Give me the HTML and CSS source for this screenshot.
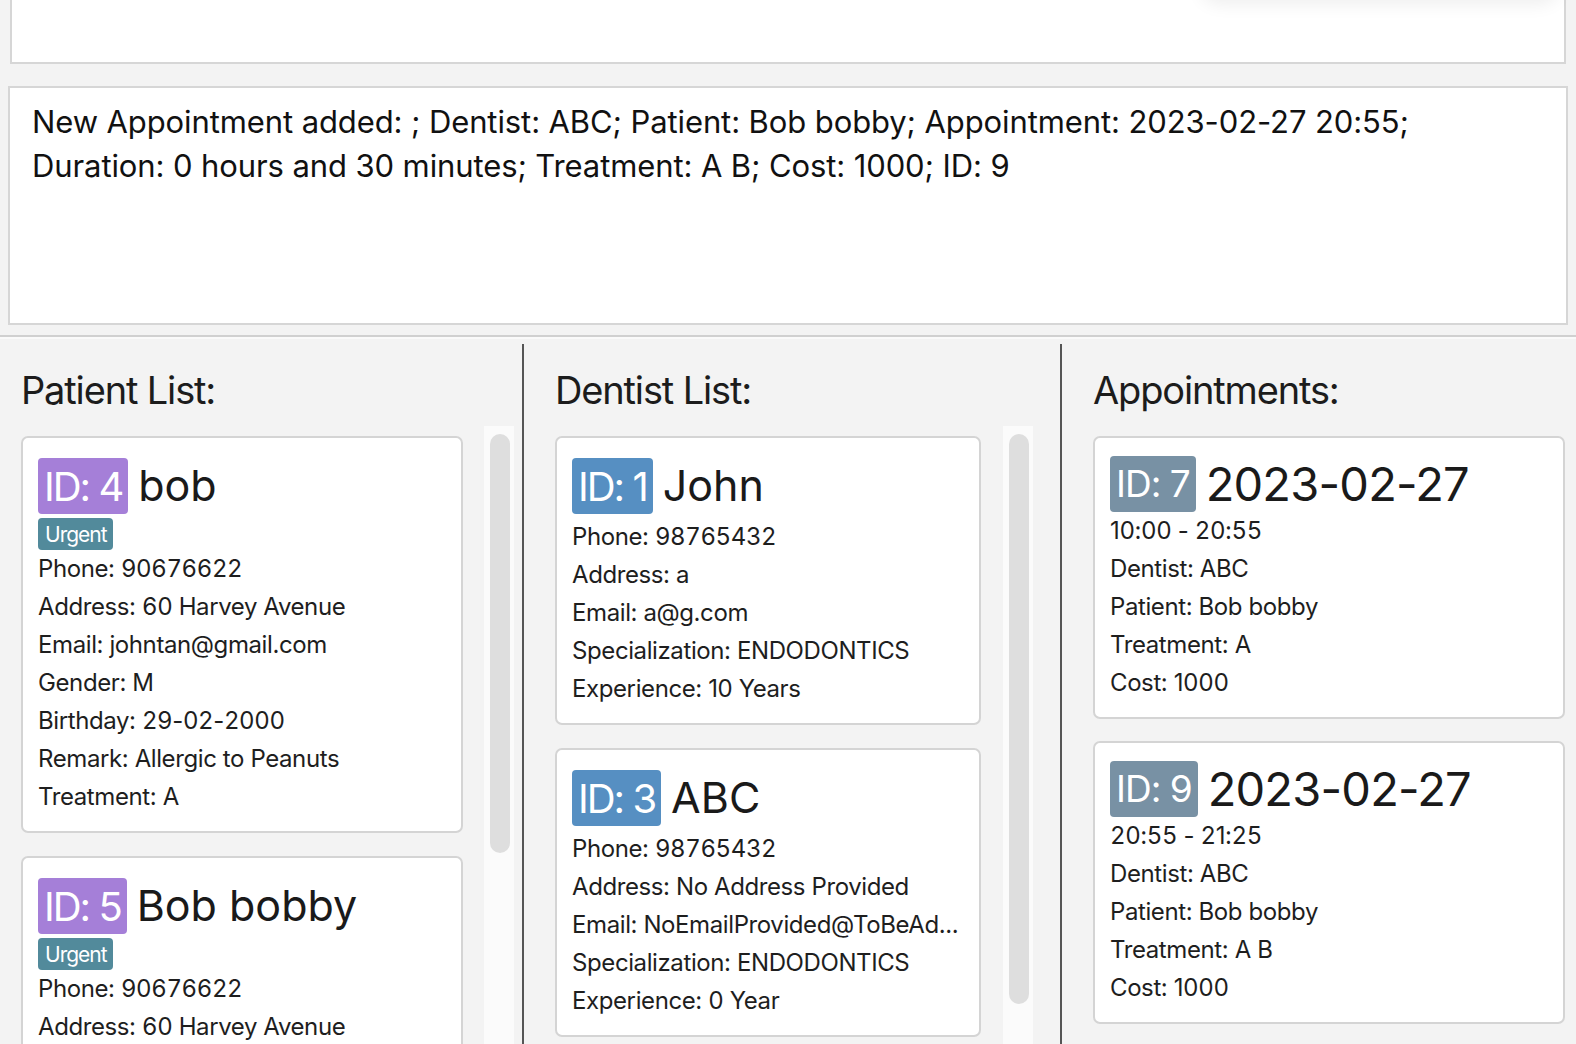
FILE: index.html
```html
<!DOCTYPE html>
<html lang="en">
<head>
<meta charset="utf-8">
<title>Dental Clinic</title>
<link rel="stylesheet" href="styles.css">
</head>
<body>
<div class="app">
  <div class="popup-shadow"></div>
  <div class="command-box"></div>
  <div class="result-box">New Appointment added: ; Dentist: ABC; Patient: Bob bobby; Appointment: 2023-02-27 20:55;<br>Duration: 0 hours and 30 minutes; Treatment: A B; Cost: 1000; ID: 9</div>
  <div class="divider"></div>
  <div class="lists">
    <section class="column column-patient">
      <h2 class="col-title">Patient List:</h2>
      <div class="list-area">
        <div class="list">
          <div class="card">
            <div class="card-head"><span class="badge badge-patient">ID: 4</span><span class="name">bob</span></div>
            <div class="tags"><span class="tag">Urgent</span></div>
            <div class="field">Phone: <span class="n">90676622</span></div>
            <div class="field">Address: <span class="n">60</span> Harvey Avenue</div>
            <div class="field">Email: johntan@gmail.com</div>
            <div class="field">Gender: M</div>
            <div class="field">Birthday: <span class="n">29</span>-<span class="n">02</span>-<span class="n">2000</span></div>
            <div class="field">Remark: Allergic to Peanuts</div>
            <div class="field">Treatment: A</div>
          </div>
          <div class="card">
            <div class="card-head"><span class="badge badge-patient">ID: 5</span><span class="name">Bob bobby</span></div>
            <div class="tags"><span class="tag">Urgent</span></div>
            <div class="field">Phone: <span class="n">90676622</span></div>
            <div class="field">Address: <span class="n">60</span> Harvey Avenue</div>
            <div class="field">Email: johntan@gmail.com</div>
            <div class="field">Gender: M</div>
          </div>
        </div>
        <div class="scrollbar"><div class="thumb thumb-patient"></div></div>
      </div>
    </section>
    <div class="vsep"></div>
    <section class="column column-dentist">
      <h2 class="col-title">Dentist List:</h2>
      <div class="list-area">
        <div class="list">
          <div class="card">
            <div class="card-head"><span class="badge badge-dentist">ID: 1</span><span class="name">John</span></div>
            <div class="field">Phone: <span class="n">98765432</span></div>
            <div class="field">Address: a</div>
            <div class="field">Email: a@g.com</div>
            <div class="field">Specialization: ENDODONTICS</div>
            <div class="field">Experience: 10 Years</div>
          </div>
          <div class="card">
            <div class="card-head"><span class="badge badge-dentist">ID: 3</span><span class="name">ABC</span></div>
            <div class="field">Phone: <span class="n">98765432</span></div>
            <div class="field">Address: No Address Provided</div>
            <div class="field">Email: NoEmailProvided@ToBeAd...</div>
            <div class="field">Specialization: ENDODONTICS</div>
            <div class="field">Experience: <span class="n">0</span> Year</div>
          </div>
        </div>
        <div class="scrollbar"><div class="thumb thumb-dentist"></div></div>
      </div>
    </section>
    <div class="vsep"></div>
    <section class="column column-appt">
      <h2 class="col-title">Appointments:</h2>
      <div class="list-area">
        <div class="list list-appt">
          <div class="card card-appt">
            <div class="card-head card-head-appt"><span class="badge badge-appt">ID: 7</span><span class="name name-appt">2023-02-27</span></div>
            <div class="field">1<span class="n">0</span>:<span class="n">00</span> - <span class="n">20</span>:<span class="n">55</span></div>
            <div class="field">Dentist: ABC</div>
            <div class="field">Patient: Bob bobby</div>
            <div class="field">Treatment: A</div>
            <div class="field">Cost: 1<span class="n">000</span></div>
          </div>
          <div class="card card-appt">
            <div class="card-head card-head-appt"><span class="badge badge-appt">ID: 9</span><span class="name name-appt">2023-02-27</span></div>
            <div class="field"><span class="n">20</span>:<span class="n">55</span> - <span class="n">2</span>1:<span class="n">25</span></div>
            <div class="field">Dentist: ABC</div>
            <div class="field">Patient: Bob bobby</div>
            <div class="field">Treatment: A B</div>
            <div class="field">Cost: 1<span class="n">000</span></div>
          </div>
        </div>
      </div>
    </section>
  </div>
</div>
</body>
</html>
```

FILE: styles.css
```css
* { box-sizing: border-box; }

html, body {
  margin: 0;
  padding: 0;
  height: 100%;
  overflow: hidden;
}

body {
  background: #f3f3f3;
  font-family: Inter, "Noto Sans", "Liberation Sans", sans-serif;
  color: #1e1e1e;
}

.app {
  position: relative;
  width: 1576px;
  height: 1044px;
  overflow: hidden;
}

.popup-shadow {
  position: absolute;
  left: 1200px;
  top: -40px;
  width: 360px;
  height: 40px;
  border-radius: 20px;
  box-shadow: 0 4px 18px rgba(0, 0, 0, 0.07);
  background: #ffffff;
}

.command-box {
  margin: -10px 10px 0 10px;
  height: 74px;
  background: #ffffff;
  border: 2px solid #d6d6d6;
}

.result-box {
  margin: 22px 8px 0 8px;
  height: 239px;
  background: #ffffff;
  border: 2px solid #d6d6d6;
  padding: 12px 20px 0 22px;
  font-size: 31px;
  line-height: 43.5px;
  letter-spacing: -0.1px;
  color: #111111;
}

.divider {
  margin-top: 10px;
  height: 4px;
  border-top: 2px solid #d0d0d0;
  border-bottom: 2px solid #fafafa;
}

.lists {
  display: grid;
  grid-template-columns: 522px 2px 536px 2px 514px;
  height: 705px;
}

.vsep {
  margin-top: 5px;
  background: #555555;
}

.column {
  display: flex;
  flex-direction: column;
  padding-top: 28px;
  overflow: hidden;
}

.column-patient { padding-left: 21px; }
.column-dentist { padding-left: 31px; }
.column-appt { padding-left: 31px; }

.col-title {
  margin: 0;
  font-size: 38px;
  font-weight: 400;
  line-height: 46px;
  letter-spacing: -1.15px;
  color: #1c1c1c;
}

.list-area {
  margin-top: 13px;
  display: flex;
  gap: 21px;
  flex: 1;
}

.column-dentist .list-area { gap: 22px; }

.list {
  padding-top: 10px;
  display: flex;
  flex-direction: column;
  gap: 23px;
}

.list-appt { gap: 22px; }

.column-patient .list { width: 442px; }
.column-dentist .list { width: 426px; }
.column-appt .list { width: 472px; }

.card {
  background: #ffffff;
  border: 2px solid #d4d4d4;
  border-radius: 7px;
  padding: 20px 15px 15px 15px;
  flex-shrink: 0;
}

.card-appt { padding-top: 17px; }

.card-head {
  display: flex;
  align-items: baseline;
  gap: 10px;
  height: 56px;
  margin-bottom: 4px;
}

.card-head-appt {
  align-items: center;
  height: 57px;
  margin-bottom: 0;
}

.badge {
  display: flex;
  align-items: center;
  height: 56px;
  padding: 0 6px;
  border-radius: 4px;
  color: #ffffff;
  font-size: 40px;
  letter-spacing: -2px;
}

.badge-patient { background: #a57fd8; }
.badge-dentist { background: #568fc2; }
.badge-appt {
  background: #7891a4;
  font-size: 37px;
  letter-spacing: -1px;
}

.name {
  font-size: 43px;
  letter-spacing: 0;
  color: #1a1a1a;
  white-space: nowrap;
}

.name-appt {
  font-size: 47px;
  line-height: 57px;
  letter-spacing: -0.8px;
}

.tags {
  display: flex;
  height: 32px;
}

.tag {
  display: flex;
  align-items: center;
  height: 32px;
  padding: 0 6px 0 7px;
  border-radius: 4px;
  background: #528a9b;
  color: #ffffff;
  font-size: 21px;
  letter-spacing: -1px;
}

.field {
  font-size: 24px;
  line-height: 38px;
  letter-spacing: -0.4px;
  color: #1e1e1e;
  white-space: nowrap;
}

.n {
  font-feature-settings: "tnum" 1;
}

.scrollbar {
  width: 30px;
  background: #fbfbfb;
  padding: 8px 5px 0 6px;
  flex-shrink: 0;
}

.thumb {
  width: 20px;
  background: #dedede;
  border-radius: 10px;
}

.thumb-patient { height: 419px; }
.thumb-dentist { height: 570px; }
```
